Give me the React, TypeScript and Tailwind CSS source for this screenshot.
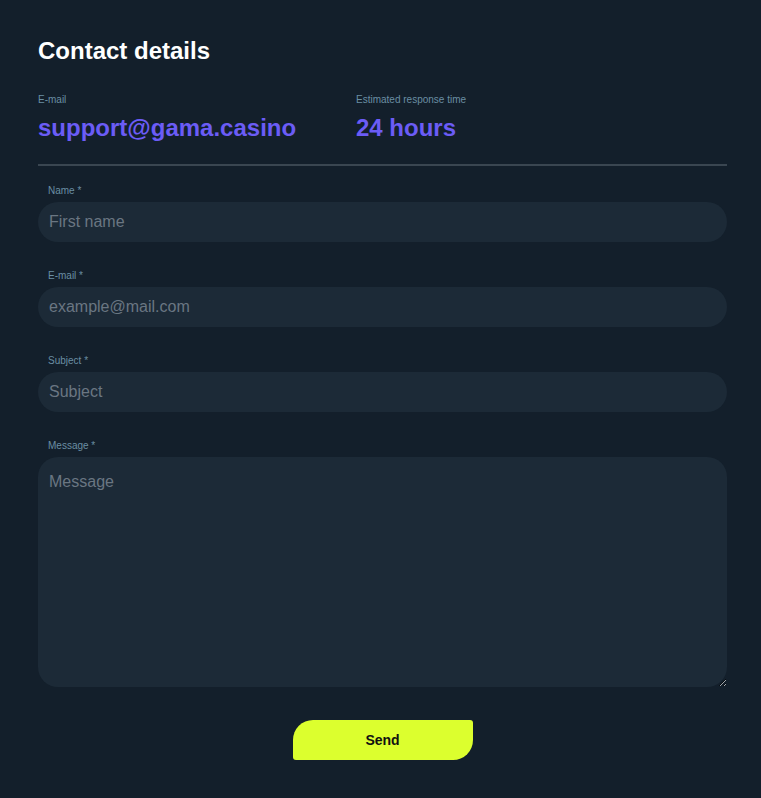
import React from "react";

const font = { fontFamily: '"Liberation Sans", Arial, sans-serif' };

function Field({ label, placeholder }: { label: string; placeholder: string }) {
  return (
    <div className="flex flex-col">
      <label className="pl-[10px] text-[10px] leading-[12px] text-[#6a8ea3] mb-[5px]">{label}</label>
      <input
        placeholder={placeholder}
        className="h-[40px] w-full rounded-[20px] bg-[#1c2a37] px-[11px] text-[16px] text-white placeholder:text-[#6a7682] outline-none"
        style={font}
      />
    </div>
  );
}

export default function App() {
  return (
    <div className="min-h-[798px] w-full bg-[#131f2b]" style={font}>
      <div className="pl-[38px] pr-[34px] pt-[36px] pb-[38px]">
        <h1 className="text-[24px] font-bold leading-[29px] text-white">Contact details</h1>
        <div className="mt-[29px] flex">
          <div className="w-[318px]">
            <div className="text-[10px] leading-[11px] text-[#6a8ea3]">E-mail</div>
            <div className="mt-[9px] text-[24px] font-bold leading-[28px] text-[#6b5cf6]">support@gama.casino</div>
          </div>
          <div>
            <div className="text-[10px] leading-[11px] text-[#6a8ea3]">Estimated response time</div>
            <div className="mt-[9px] text-[24px] font-bold leading-[28px] text-[#6b5cf6]">24 hours</div>
          </div>
        </div>
        <div className="mt-[22px] h-[2px] bg-[#3a4651]" />
        <div className="mt-[19px] flex flex-col gap-[28px]">
          <Field label="Name *" placeholder="First name" />
          <Field label="E-mail *" placeholder="example@mail.com" />
          <Field label="Subject *" placeholder="Subject" />
          <div className="flex flex-col">
            <label className="pl-[10px] text-[10px] leading-[12px] text-[#6a8ea3] mb-[5px]">Message *</label>
            <textarea
              placeholder="Message"
              className="h-[230px] w-full rounded-[20px] bg-[#1c2a37] px-[11px] pt-[13px] text-[16px] text-white placeholder:text-[#6a7682] outline-none"
              style={font}
            />
          </div>
        </div>
        <div className="mt-[33px] flex justify-center">
          <button className="h-[40px] w-[180px] rounded-[3px] rounded-tl-[20px] rounded-br-[20px] bg-[#dcff2e] text-[14px] font-bold text-[#111]" style={font}>
            Send
          </button>
        </div>
      </div>
    </div>
  );
}
